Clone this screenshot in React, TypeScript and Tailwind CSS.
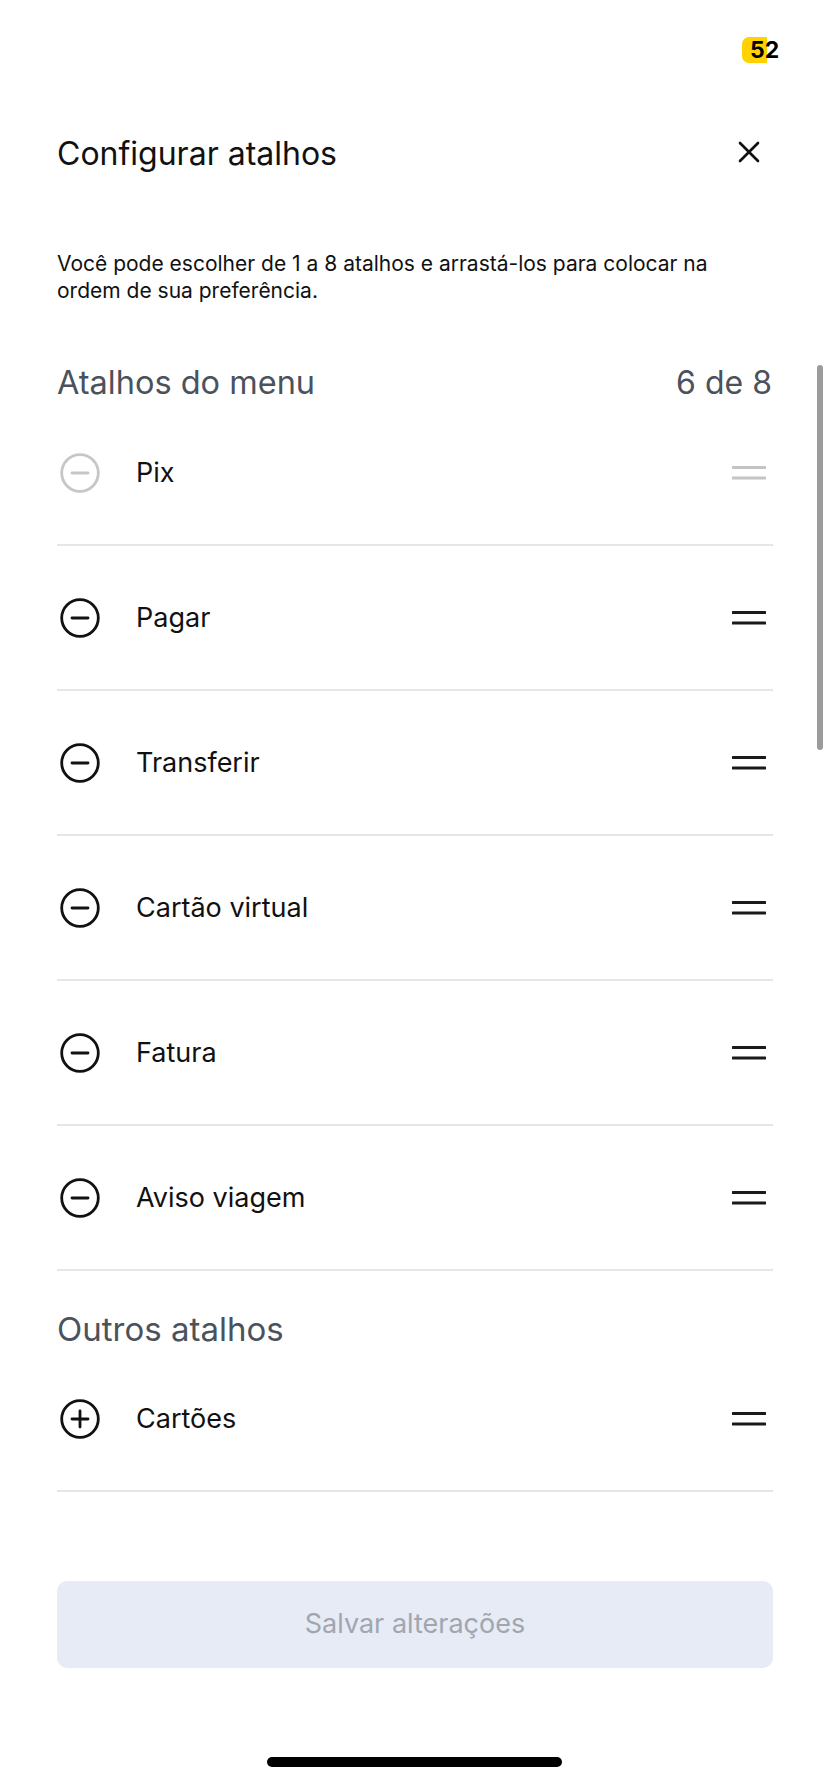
import React from "react";

const items = [
  { label: "Pix", disabled: true },
  { label: "Pagar" },
  { label: "Transferir" },
  { label: "Cartão virtual" },
  { label: "Fatura" },
  { label: "Aviso viagem" },
];

function CircleIcon({ plus, disabled }: { plus?: boolean; disabled?: boolean }) {
  const c = disabled ? "#c6c6c6" : "#111111";
  return (
    <svg width="44" height="44" viewBox="0 0 44 44" className="shrink-0">
      <circle cx="22" cy="22" r="18.3" fill="none" stroke={c} strokeWidth="2.8" />
      <line x1="14" y1="22" x2="30" y2="22" stroke={c} strokeWidth="2.8" strokeLinecap="round" />
      {plus && <line x1="22" y1="14" x2="22" y2="30" stroke={c} strokeWidth="2.8" strokeLinecap="round" />}
    </svg>
  );
}

function Handle({ disabled }: { disabled?: boolean }) {
  const c = disabled ? "#c4c4c4" : "#1a1a1a";
  return (
    <svg width="34" height="16" viewBox="0 0 34 16" className="shrink-0 mr-[7px]">
      <line x1="1" y1="2.5" x2="33" y2="2.5" stroke={c} strokeWidth="3" strokeLinecap="round" />
      <line x1="1" y1="13" x2="33" y2="13" stroke={c} strokeWidth="3" strokeLinecap="round" />
    </svg>
  );
}

function Row({ label, disabled, plus }: { label: string; disabled?: boolean; plus?: boolean }) {
  return (
    <div className="flex items-center h-[145px] border-b-2 border-[#e6e6e6]">
      <div className="ml-px">
        <CircleIcon plus={plus} disabled={disabled} />
      </div>
      <span className="ml-[34px] flex-1 text-[27px] leading-[32px] text-[#111111]">{label}</span>
      <Handle disabled={disabled} />
    </div>
  );
}

export default function App() {
  return (
    <div className="relative w-[828px] h-[1792px] bg-white overflow-hidden font-['Inter',sans-serif]">
      {/* debug badge */}
      <div className="absolute left-[742px] top-[37px] h-[26px] w-[25px] rounded-l-[7px] bg-[#ffd200]" />
      <span className="absolute left-[750px] top-[36px] text-[23px] leading-[28px] font-bold text-black">52</span>

      {/* scrollbar */}
      <div className="absolute left-[817px] top-[365px] w-[6px] h-[385px] rounded-full bg-[#9b9b9b]" />

      <div className="pl-[57px] pr-[55px] pt-[134px]">
        <div className="flex items-center justify-between h-[40px]">
          <h1 className="text-[32px] leading-[40px] text-[#111111] font-normal">Configurar atalhos</h1>
          <svg width="22" height="22" viewBox="0 0 22 22" className="mr-[13px] mt-[-4px]">
            <line x1="2" y1="2" x2="20" y2="20" stroke="#111111" strokeWidth="2.6" strokeLinecap="round" />
            <line x1="20" y1="2" x2="2" y2="20" stroke="#111111" strokeWidth="2.6" strokeLinecap="round" />
          </svg>
        </div>

        <p className="mt-[76px] text-[21px] leading-[27px] text-[#111111]">
          Você pode escolher de 1 a 8 atalhos e arrastá-los para colocar na
          <br />
          ordem de sua preferência.
        </p>

        <div className="mt-[61px] flex items-center justify-between h-[36px]">
          <span className="text-[32.5px] leading-[36px] text-[#4b525c]">Atalhos do menu</span>
          <span className="text-[32px] leading-[36px] text-[#4b525c] mr-[1px]">6 de 8</span>
        </div>

        <div>
          {items.map((it) => (
            <Row key={it.label} label={it.label} disabled={it.disabled} />
          ))}
        </div>

        <div className="mt-[40px] h-[36px] flex items-center">
          <span className="text-[33px] leading-[36px] text-[#4b525c]">Outros atalhos</span>
        </div>

        <Row label="Cartões" plus />

        <button className="mt-[89px] w-full h-[87px] rounded-[10px] bg-[#e6ebf6] flex items-center justify-center">
          <span className="text-[27px] text-[#a1a6ae]">Salvar alterações</span>
        </button>
      </div>

      {/* home indicator */}
      <div className="absolute left-[267px] top-[1757px] w-[295px] h-[10px] rounded-full bg-black" />
    </div>
  );
}
